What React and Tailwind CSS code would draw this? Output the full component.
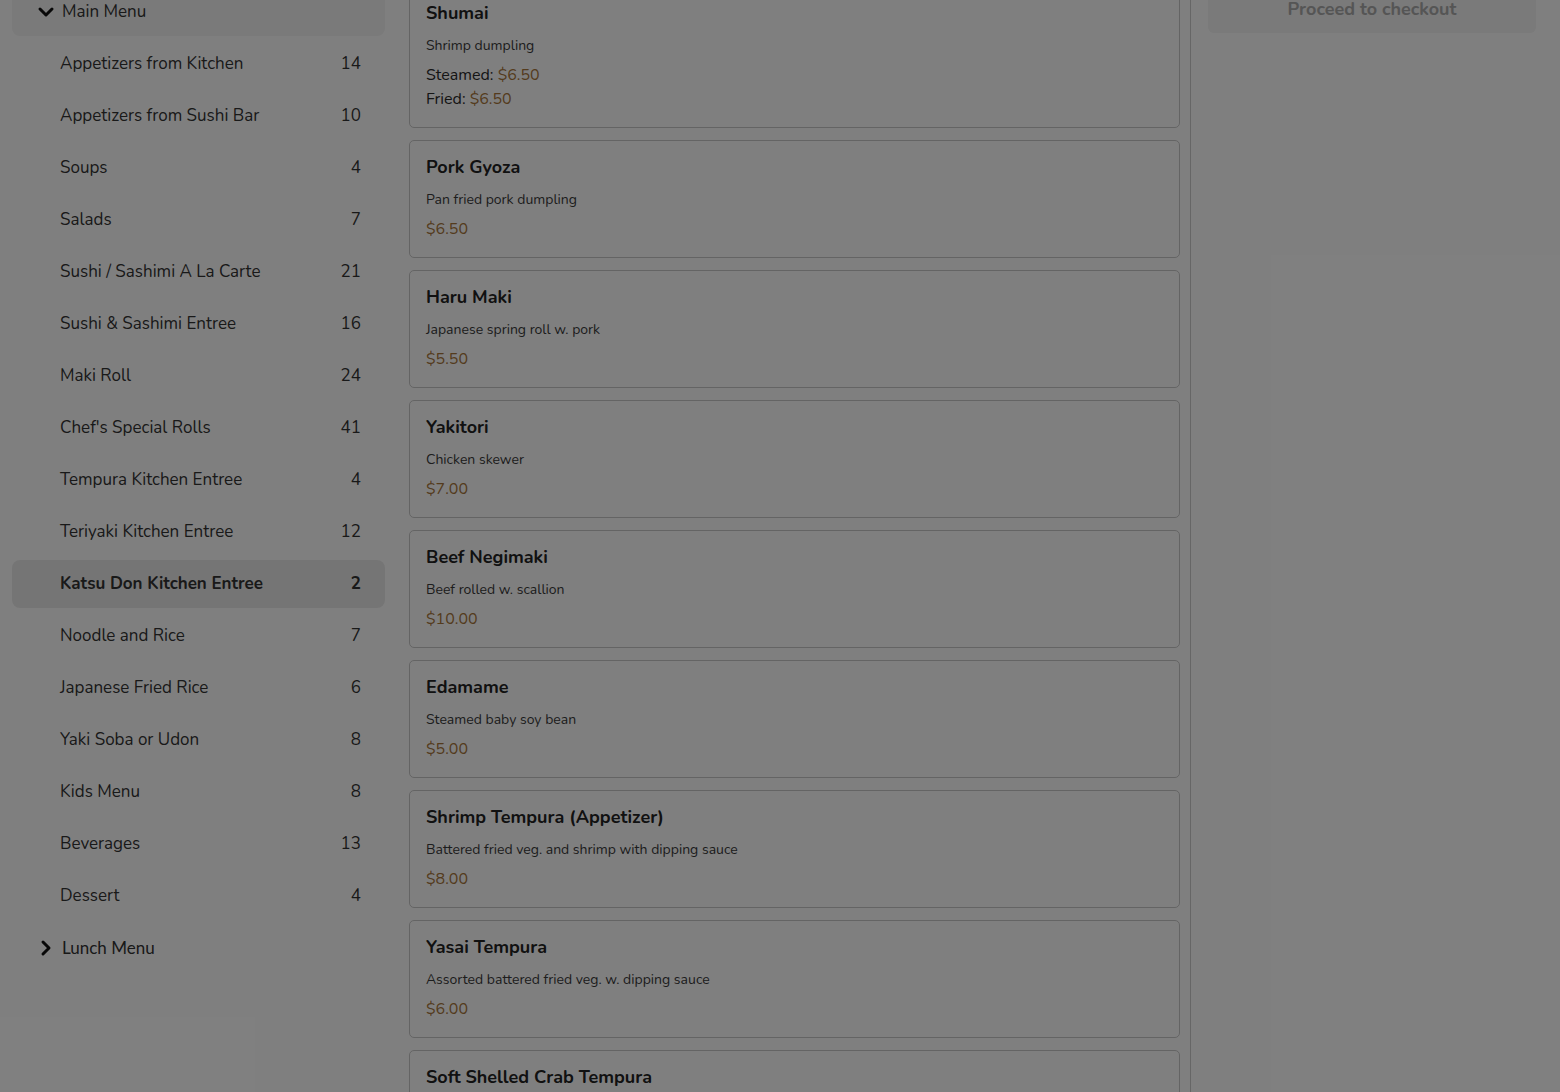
import React from 'react';
import { ChevronDown, ChevronRight } from 'lucide-react';

const categories = [
  { name: 'Appetizers from Kitchen', count: 14 },
  { name: 'Appetizers from Sushi Bar', count: 10 },
  { name: 'Soups', count: 4 },
  { name: 'Salads', count: 7 },
  { name: 'Sushi / Sashimi A La Carte', count: 21 },
  { name: 'Sushi & Sashimi Entree', count: 16 },
  { name: 'Maki Roll', count: 24 },
  { name: "Chef's Special Rolls", count: 41 },
  { name: 'Tempura Kitchen Entree', count: 4 },
  { name: 'Teriyaki Kitchen Entree', count: 12 },
  { name: 'Katsu Don Kitchen Entree', count: 2, active: true },
  { name: 'Noodle and Rice', count: 7 },
  { name: 'Japanese Fried Rice', count: 6 },
  { name: 'Yaki Soba or Udon', count: 8 },
  { name: 'Kids Menu', count: 8 },
  { name: 'Beverages', count: 13 },
  { name: 'Dessert', count: 4 },
];

const items = [
  { name: 'Shumai', desc: 'Shrimp dumpling', prices: [['Steamed', '$6.50'], ['Fried', '$6.50']] },
  { name: 'Pork Gyoza', desc: 'Pan fried pork dumpling', price: '$6.50' },
  { name: 'Haru Maki', desc: 'Japanese spring roll w. pork', price: '$5.50' },
  { name: 'Yakitori', desc: 'Chicken skewer', price: '$7.00' },
  { name: 'Beef Negimaki', desc: 'Beef rolled w. scallion', price: '$10.00' },
  { name: 'Edamame', desc: 'Steamed baby soy bean', price: '$5.00' },
  { name: 'Shrimp Tempura (Appetizer)', desc: 'Battered fried veg. and shrimp with dipping sauce', price: '$8.00' },
  { name: 'Yasai Tempura', desc: 'Assorted battered fried veg. w. dipping sauce', price: '$6.00' },
  { name: 'Soft Shelled Crab Tempura', desc: 'Battered fried soft shell crab', price: '$9.00' },
];

const MenuCard = ({ item }) => (
  <div className="rounded-[5px] border border-[#c9c9c9] bg-white px-4 pt-[13px] pb-4">
    <div className="text-[18px] font-bold leading-[26px] text-[#222]">{item.name}</div>
    <div className="mt-[10px] text-[14px] leading-[20px] text-[#3a3a3a]">{item.desc}</div>
    {item.prices ? (
      <div className="mt-[7px] text-[16px] leading-[24px] text-[#2a2a2a]">
        {item.prices.map(([label, p]) => (
          <div key={label}>
            {label}: <span className="text-[#a8763a]">{p}</span>
          </div>
        ))}
      </div>
    ) : (
      <div className="mt-[7px] text-[16px] leading-[24px] text-[#a8763a]">{item.price}</div>
    )}
  </div>
);

export default function App() {
  return (
    <div
      className="relative h-[1092px] overflow-hidden bg-white"
      style={{ fontFamily: 'Nunito, Lato, "Noto Sans", sans-serif' }}
    >
      <div className="flex h-full">
        {/* Category sidebar */}
        <div className="w-[397px] shrink-0 px-3">
          <div className="-mt-[12px] flex flex-col gap-1">
            <div className="flex h-12 items-center gap-1 rounded-lg bg-[#f4f4f4] pl-[22px] text-[17px] text-[#333]">
              <ChevronDown size={24} strokeWidth={3} className="text-[#111]" />
              <span>Main Menu</span>
            </div>
            {categories.map((c) => (
              <div
                key={c.name}
                className={`flex h-12 items-center justify-between rounded-lg pl-12 pr-6 text-[17px] text-[#333] ${
                  c.active ? 'bg-[#ebebeb] font-bold text-[#222]' : ''
                }`}
              >
                <span>{c.name}</span>
                <span>{c.count}</span>
              </div>
            ))}
            <div className="flex h-12 items-center gap-1 pl-[22px] text-[17px] text-[#333]">
              <ChevronRight size={24} strokeWidth={3} className="text-[#111]" />
              <span style={{ fontFamily: 'Lato, sans-serif' }}>Lunch Menu</span>
            </div>
          </div>
        </div>

        {/* Menu items */}
        <div className="w-[794px] shrink-0 border-r border-[#cccccc] pl-3 pr-[10px]">
          <div className="-mt-[14px] flex flex-col gap-3">
            {items.map((it) => (
              <MenuCard key={it.name} item={it} />
            ))}
          </div>
        </div>

        {/* Cart */}
        <div className="flex-1 pl-[17px] pr-6">
          <div className="-mt-[15px] flex h-12 items-center justify-center rounded-md bg-[#f4f4f4] text-[18px] font-bold text-[#aaaaaa]">
            Proceed to checkout
          </div>
        </div>
      </div>

      {/* modal backdrop */}
      <div className="absolute inset-0 bg-black/50" />
    </div>
  );
}
